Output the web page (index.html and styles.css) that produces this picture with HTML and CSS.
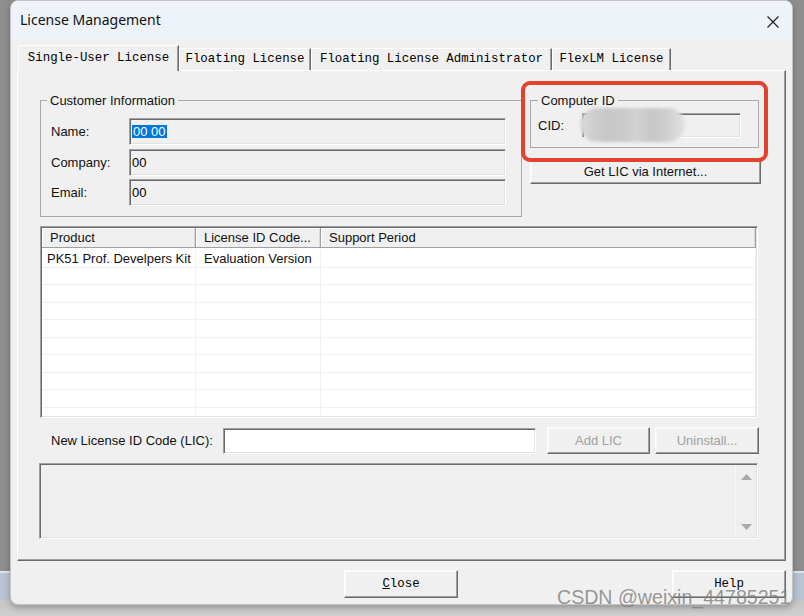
FILE: index.html
```html
<!DOCTYPE html>
<html>
<head>
<meta charset="utf-8">
<link rel="stylesheet" href="styles.css">
</head>
<body>
<div class="desk">
  <div class="dialog">
    <div class="titlebar">
      <span class="title">License Management</span>
      <svg class="close-x" width="12" height="12" viewBox="0 0 12 12"><path d="M0.5 0.5 L11.5 11.5 M11.5 0.5 L0.5 11.5" stroke="#1a1a1a" stroke-width="1.1" fill="none"/></svg>
    </div>
    <div class="dlg-body">
      <div class="tabs">
        <div class="tab tab-active t1">Single-User License</div>
        <div class="tab t2">Floating License</div>
        <div class="tab t3">Floating License Administrator</div>
        <div class="tab t4">FlexLM License</div>
      </div>
      <div class="panel">
        <div class="top-row">
          <fieldset class="group cust">
            <legend>Customer Information</legend>
            <div class="form-grid">
              <label class="lbl">Name:</label>
              <div class="field ro"><span class="sel">00 00</span></div>
              <label class="lbl">Company:</label>
              <div class="field ro"><span>00</span></div>
              <label class="lbl">Email:</label>
              <div class="field ro"><span>00</span></div>
            </div>
          </fieldset>
          <div class="right-col">
            <fieldset class="group comp">
              <legend>Computer ID</legend>
              <div class="cid-row">
                <label class="lbl cid-lbl">CID:</label>
                <div class="field ro cid"><div class="blur"></div></div>
              </div>
            </fieldset>
            <div class="btn getlic">Get LIC via Internet...</div>
            <div class="annot"></div>
          </div>
        </div>
        <div class="listview">
          <div class="lv-head">
            <div class="hcell">Product</div>
            <div class="hcell">License ID Code...</div>
            <div class="hcell">Support Period</div>
          </div>
          <div class="lv-body">
            <div class="lv-row"><div class="cell c1">PK51 Prof. Develpers Kit</div><div class="cell">Evaluation Version</div><div class="cell"></div></div>
            <div class="lv-row"><div class="cell c1"></div><div class="cell"></div><div class="cell"></div></div>
            <div class="lv-row"><div class="cell c1"></div><div class="cell"></div><div class="cell"></div></div>
            <div class="lv-row"><div class="cell c1"></div><div class="cell"></div><div class="cell"></div></div>
            <div class="lv-row"><div class="cell c1"></div><div class="cell"></div><div class="cell"></div></div>
            <div class="lv-row"><div class="cell c1"></div><div class="cell"></div><div class="cell"></div></div>
            <div class="lv-row"><div class="cell c1"></div><div class="cell"></div><div class="cell"></div></div>
            <div class="lv-row"><div class="cell c1"></div><div class="cell"></div><div class="cell"></div></div>
            <div class="lv-row"><div class="cell c1"></div><div class="cell"></div><div class="cell"></div></div>
            <div class="lv-row"><div class="cell c1"></div><div class="cell"></div><div class="cell"></div></div>
          </div>
        </div>
        <div class="lic-row">
          <label class="lbl lic-lbl">New License ID Code (LIC):</label>
          <div class="field lic-input"></div>
          <div class="btn disabled addlic">Add LIC</div>
          <div class="btn disabled uninst">Uninstall...</div>
        </div>
        <div class="msgbox">
          <div class="msg-content"></div>
          <div class="msg-scroll">
            <svg width="11" height="6" viewBox="0 0 11 6"><path d="M5.5 0 L11 6 L0 6 Z" fill="#a8a8a8"/></svg>
            <svg width="11" height="6" viewBox="0 0 11 6"><path d="M0 0 L11 0 L5.5 6 Z" fill="#a8a8a8"/></svg>
          </div>
        </div>
      </div>
      <div class="footer">
        <div class="btn mono close-btn"><u>C</u>lose</div>
        <div class="btn mono help-btn">Help</div>
      </div>
    </div>
  </div>
  <div class="watermark">CSDN @weixin_44785251</div>
</div>
</body>
</html>
```

FILE: styles.css
```css
* { box-sizing: border-box; }
html, body { margin: 0; padding: 0; }
body {
  width: 804px;
  height: 616px;
  overflow: hidden;
  font-family: "Liberation Sans", Arial, sans-serif;
  font-size: 13px;
  color: #000;
}
.desk {
  position: relative;
  width: 804px;
  height: 616px;
  padding-left: 10px;
  background: linear-gradient(to bottom, #8e8e8e 0, #8e8e8e 571px, #dfe5ec 571px, #dfe5ec 573px, #b8c4d3 573px, #b8c4d3 600px, #c6c6c6 600px, #cfcfcf 616px);
}
.dialog {
  width: 783px;
  height: 605px;
  border: 1px solid #c4c4c4;
  border-radius: 8px;
  background: #f0f0f0;
  overflow: hidden;
  box-shadow: 0 3px 6px rgba(0,0,0,0.25);
}
.titlebar {
  height: 39px;
  background: #eef2f9;
  display: flex;
  align-items: center;
  justify-content: space-between;
  padding: 0 13px 0 9px;
}
.title {
  font-family: "Segoe UI", "Noto Sans", "Liberation Sans", sans-serif;
  font-size: 14px;
  color: #111;
  position: relative;
  top: -1px;
}
.close-x { display: block; margin-top: 2px; }
.dlg-body {
  padding: 0 6px;
}
.tabs {
  display: flex;
  align-items: flex-end;
  height: 25px;
  margin-top: 5px;
  padding-left: 1px;
}
.tab {
  font-family: "Liberation Mono", "Courier New", monospace;
  font-size: 12.4px;
  text-align: center;
  white-space: nowrap;
  height: 22px;
  line-height: 21px;
  background: #f0f0f0;
  border-top: 1px solid #fff;
  border-left: 1px solid #fff;
  border-right: 1px solid #6a6a6a;
  box-shadow: inset -1px 0 #a0a0a0;
}
.tab-active {
  height: 26px;
  margin-bottom: -1px;
  position: relative;
  z-index: 1;
  padding-top: 2px;
  line-height: 20px;
}
.t1 { width: 161px; }
.t2 { width: 132px; }
.t3 { width: 241px; }
.t4 { width: 119px; }
.panel {
  width: 769px;
  height: 491px;
  border-top: 1px solid #fff;
  border-left: 1px solid #fff;
  border-right: 1px solid #6a6a6a;
  border-bottom: 1px solid #6a6a6a;
  box-shadow: inset -1px -1px #a0a0a0;
  padding: 22px 0 0 22px;
}
.top-row {
  display: flex;
  align-items: flex-start;
}
.group {
  margin: 0;
  min-width: 0;
  border: 1px solid #a8a8a8;
  padding: 0;
}
.group legend {
  font-size: 13px;
  line-height: 15px;
  padding: 0 3px;
  color: #111;
}
.cust {
  width: 482px;
  padding: 10px 0 10px 0;
}
.cust legend { margin-left: 6px; }
.form-grid {
  margin-left: 10px;
  display: grid;
  grid-template-columns: 78px 377px;
  grid-auto-rows: 27px;
  row-gap: 3.5px;
  align-items: center;
}
.lbl { color: #111; white-space: nowrap; }
.field {
  height: 27px;
  border-top: 1px solid #a0a0a0;
  border-left: 1px solid #a0a0a0;
  border-bottom: 1px solid #fff;
  border-right: 1px solid #fff;
  box-shadow: inset 1px 1px #6a6a6a, inset -1px -1px #e3e3e3;
  background: #fff;
  display: flex;
  align-items: center;
  padding-left: 2px;
}
.field.ro { background: #f0f0f0; }
.sel {
  background: #0078d7;
  color: #fff;
  line-height: 13px;
  padding: 0 1px;
}
.right-col {
  position: relative;
  width: 231px;
  margin-left: 8px;
}
.comp {
  width: 229px;
  padding: 5px 0 9px 0;
}
.comp legend { margin-left: 7px; }
.cid-row {
  display: flex;
  align-items: center;
}
.cid-lbl { width: 44px; margin-left: 7px; }
.cid {
  width: 159px;
  height: 25px;
  position: relative;
}
.blur {
  position: absolute;
  left: -3px;
  top: -6px;
  width: 105px;
  height: 34px;
  border-radius: 17px;
  background: linear-gradient(90deg, #dadada 0, #cdcdcd 14%, #c7c7c7 26%, #cbcbcb 44%, #d2d2d2 54%, #c6c6c6 68%, #d0d0d0 84%, #e2e2e2 100%);
  filter: blur(1.5px);
}
.btn {
  display: flex;
  align-items: center;
  justify-content: center;
  background: #f0f0f0;
  border: 1px solid;
  border-color: #fff #6a6a6a #6a6a6a #fff;
  box-shadow: inset -1px -1px #a0a0a0, inset 1px 1px #f8f8f8;
  color: #111;
  white-space: nowrap;
}
.btn.disabled { color: #a0a0a0; }
.mono {
  font-family: "Liberation Mono", "Courier New", monospace;
  font-size: 12.4px;
  color: #000;
}
.getlic {
  margin-top: 10px;
  width: 231px;
  height: 26px;
}
.annot {
  position: absolute;
  left: -9px;
  top: -12px;
  width: 247px;
  height: 81px;
  border: 4px solid #e5412d;
  border-radius: 9px;
}
.listview {
  margin-top: 9px;
  width: 718px;
  height: 192px;
  border-top: 1px solid #a0a0a0;
  border-left: 1px solid #a0a0a0;
  border-bottom: 1px solid #fff;
  border-right: 1px solid #fff;
  box-shadow: inset 1px 1px #6a6a6a, inset -1px -1px #e3e3e3;
  padding: 1px;
  overflow: hidden;
}
.lv-head {
  display: grid;
  grid-template-columns: 154px 125px 1fr;
  height: 20px;
}
.hcell {
  background: #f0f0f0;
  border-right: 1px solid #a0a0a0;
  border-bottom: 1px solid #a0a0a0;
  box-shadow: inset 1px 1px #fff, inset -1px 0 #d8d8d8;
  padding-left: 8px;
  line-height: 19px;
  color: #111;
}
.lv-body {
  background: #fff;
  padding-top: 2px;
  height: 168px;
  overflow: hidden;
}
.lv-row {
  display: grid;
  grid-template-columns: 154px 125px 1fr;
  height: 17.5px;
}
.cell {
  border-right: 1px solid #f0f0f0;
  border-bottom: 1px solid #f0f0f0;
  padding-left: 8px;
  line-height: 17px;
  white-space: nowrap;
  overflow: hidden;
  color: #111;
}
.cell.c1 { padding-left: 5px; }
.lic-row {
  margin-top: 9px;
  display: flex;
  align-items: center;
  height: 27px;
}
.lic-lbl {
  width: 172px;
  margin-left: 11px;
}
.lic-input {
  width: 313px;
  height: 26px;
}
.addlic {
  margin-left: 11px;
  width: 103px;
  height: 27px;
}
.uninst {
  margin-left: 5px;
  width: 104px;
  height: 27px;
}
.msgbox {
  margin-top: 9px;
  margin-left: -1px;
  width: 719px;
  height: 76px;
  display: flex;
  background: #efefef;
  border-top: 1px solid #a0a0a0;
  border-left: 1px solid #a0a0a0;
  border-bottom: 1px solid #fff;
  border-right: 1px solid #fff;
  box-shadow: inset 1px 1px #6a6a6a, inset -1px -1px #e3e3e3;
  padding: 1px;
}
.msg-content { flex: 1; }
.msg-scroll {
  width: 21px;
  border-left: 1px solid #f8f8f8;
  display: flex;
  flex-direction: column;
  align-items: center;
  justify-content: space-between;
  padding: 9px 0 7px 0;
}
.msg-scroll svg { display: block; }
.footer {
  height: 43px;
  display: flex;
  align-items: flex-start;
  padding-top: 9px;
}
.close-btn {
  margin-left: 327px;
  width: 114px;
  height: 28px;
}
.help-btn {
  margin-left: auto;
  width: 114px;
  height: 28px;
}
.watermark {
  position: absolute;
  left: 557px;
  top: 586px;
  font-family: "Liberation Sans", Arial, sans-serif;
  font-size: 19.6px;
  line-height: 22px;
  color: rgba(125, 125, 125, 0.8);
  white-space: nowrap;
}
```
